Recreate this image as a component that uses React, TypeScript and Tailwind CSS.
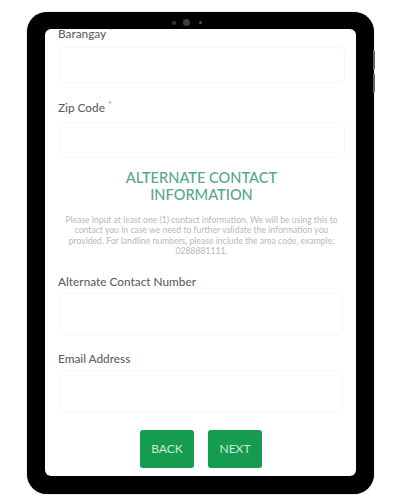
const labelClass = "block font-['Lato',sans-serif] text-[11.8px] font-medium leading-4 text-[#5f6163]"
const inputClass = "block rounded-md border border-[#f6f6f6] bg-white"

export default function App() {
    return (
        <div className="h-[500px] w-[400px] overflow-hidden bg-white pl-[27px] pt-[12px] font-['Lato',sans-serif]">
            {/* Tablet */}
            <div className="relative h-[482px] w-[347px] rounded-[20px] bg-black px-[18px] pb-[18px] pt-[17px] shadow-[0_0_1px_#555]">
                <div className="absolute left-[145px] top-[7px] flex items-center">
                    <span className="h-[4px] w-[4px] rounded-full bg-[#3a3a3a]" />
                    <span className="ml-[7px] h-[7px] w-[7px] rounded-full bg-[#3f3f3f]" />
                    <span className="ml-[9px] h-[3px] w-[3px] rounded-full bg-[#555]" />
                </div>
                <div className="absolute -right-[1px] top-[38px] h-[20px] w-[2px] rounded-r bg-[#666]" />
                <div className="absolute -right-[1px] top-[61px] h-[20px] w-[2px] rounded-r bg-[#666]" />

                {/* Screen */}
                <div className="h-[447px] w-[311px] overflow-hidden rounded-[6px] bg-white pl-[13px] pr-[11px]">
                    <label className={`${labelClass} -mt-[3px]`}>
                        Barangay <span className="relative -top-1 text-[9px] leading-none text-[#999]">*</span>
                    </label>
                    <div className={`${inputClass} mt-[5px] h-[36px]`} />

                    <label className={`${labelClass} mt-[17px]`}>
                        Zip Code <span className="relative -top-1 text-[9px] leading-none text-[#999]">*</span>
                    </label>
                    <div className={`${inputClass} mt-[6px] h-[36px]`} />

                    <h2 className="mt-[11px] text-center text-[14.6px] font-medium leading-[17px] text-[#57a788]">
                        ALTERNATE CONTACT
                        <br />
                        INFORMATION
                    </h2>

                    <p className="mt-[12px] whitespace-nowrap text-center text-[8.65px] leading-[10.4px] text-[#b9b9b9]">
                        Please input at least one (1) contact information. We will be using this to
                        <br />
                        contact you in case we need to further validate the information you
                        <br />
                        provided. For landline numbers, please include the area code, example:
                        <br />
                        0288881111.
                    </p>

                    <label className={`${labelClass} mt-[17px]`}>Alternate Contact Number</label>
                    <div className={`${inputClass} mr-[2px] mt-[3px] h-[42px]`} />

                    <label className={`${labelClass} mt-[16px]`}>Email Address</label>
                    <div className={`${inputClass} mr-[2px] mt-[3px] h-[42px]`} />

                    <div className="mt-[18px] flex justify-center gap-[14px] pr-[1px]">
                        <button className="h-[38px] w-[54px] rounded-[3px] bg-[#159c50] text-[12px] text-[#cfe9d8]">BACK</button>
                        <button className="h-[38px] w-[54px] rounded-[3px] bg-[#159c50] text-[12px] text-[#cfe9d8]">NEXT</button>
                    </div>
                </div>
            </div>
        </div>
    )
}
